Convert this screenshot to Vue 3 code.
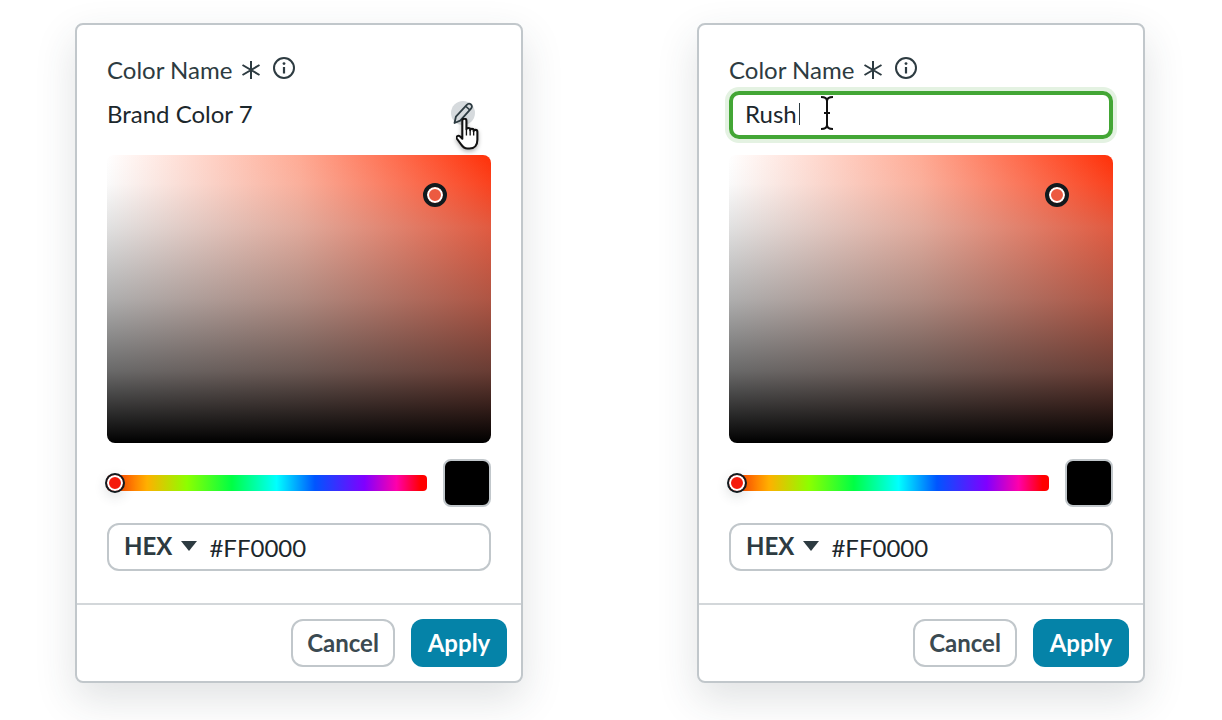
<script setup>
const cards = [{ id: 1, name: 'Brand Color 7', editing: false }, { id: 2, name: 'Rush', editing: true }]
</script>

<template>
  <main class="page">
    <section v-for="card in cards" :key="card.id" class="card">
      <div class="body">
        <div class="label">
          <span>Color Name</span>
          <svg class="asterisk" width="20" height="20" viewBox="0 0 20 20"><path d="M10 1v18M1.500 5l17 10M18.500 5l-17 10" fill="none" stroke="#2d3b41" stroke-width="2"/></svg>
          <svg class="info" width="24" height="24" viewBox="0 0 24 24"><circle cx="12" cy="12" r="10" fill="none" stroke="#2d3b41" stroke-width="2"/><circle cx="12" cy="7.600" r="1.400" fill="#2d3b41"/><path d="M12 11v6.500" stroke="#2d3b41" stroke-width="2.200" fill="none"/></svg>
        </div>
        <div v-if="!card.editing" class="name-row">
          <span class="name-text">{{ card.name }}</span>
          <span class="edit">
            <svg width="24" height="24" viewBox="0 0 24 24"><path d="M3.500 22l1.400-6.300L15.800 3.800c1.200-1.300 3-1.400 4.200-.3s1.200 2.900 0 4.200L9.200 19.600z" fill="none" stroke="#2d3b41" stroke-width="1.800" stroke-linejoin="round"/><path d="M15 5.500l4 3.600" stroke="#2d3b41" stroke-width="1.600"/></svg>
          </span>
          <svg class="hand" width="25" height="32" viewBox="0 0 24 31"><path d="M6 2.600c0-2.600 4-2.600 4 0v8.400c0-1.800 3.600-1.800 3.600 0v.8c0-1.800 3.400-1.800 3.400 0v1c0-1.800 3.600-1.800 3.600 0.400v7.800c0 5-2.600 8.500-7.600 8.500h-2c-3 0-4.600-1.600-6.200-4l-4-5.400c-1.400-2 1.100-3.800 2.900-2.300l2.300 2.300z" fill="#fff" stroke="#111" stroke-width="2" stroke-linejoin="round"/><path d="M10 11v6M13.600 12v5M17 13v4" fill="none" stroke="#111" stroke-width="1.300"/></svg>
        </div>
        <div v-else class="name-input">
          <span class="name-text">{{ card.name }}</span><i class="caret"></i>
          <svg class="ibeam" width="16" height="36" viewBox="0 0 16 36"><path d="M2 2c3 0 6 1 6 4v24c0 3-3 4-6 4M14 2c-3 0-6 1-6 4v24c0 3 3 4 6 4M5 18h6" fill="none" stroke="#111" stroke-width="2"/></svg>
        </div>
        <div class="picker">
          <span class="marker"></span>
        </div>
        <div class="hue-row">
          <div class="hue"><span class="thumb"></span></div>
          <div class="swatch"></div>
        </div>
        <div class="hex">
          <strong>HEX</strong>
          <svg width="18" height="10" viewBox="0 0 18 10"><path d="M1 0h16l-8 10z" fill="#2d3b41"/></svg>
          <span class="hex-value">#FF0000</span>
        </div>
      </div>
      <footer class="footer">
        <button class="btn cancel">Cancel</button>
        <button class="btn apply">Apply</button>
      </footer>
    </section>
  </main>
</template>

<style>
html, body { margin: 0; background: #fff; }
</style>

<style scoped>
.page {
  display: flex;
  gap: 174px;
  padding: 23px 0 0 75px;
  height: 697px;
  overflow: hidden;
  font-family: Lato, "Liberation Sans", sans-serif;
  color: #2d3b41;
}
.card {
  box-sizing: border-box;
  width: 448px;
  height: 660px;
  border: 2px solid #c1c7cb;
  border-radius: 8px;
  background: #fff;
  box-shadow: 0 16px 40px rgba(45, 59, 65, 0.15);
  display: flex;
  flex-direction: column;
}
.body { padding: 30px 30px 0; height: 578px; box-sizing: border-box; }
.label {
  display: flex;
  align-items: center;
  height: 30px;
  font-size: 24px;
  line-height: 30px;
}
.asterisk { margin-left: 9px; }
.info { margin-left: 11px; margin-top: -4px; }
.name-row {
  position: relative;
  display: flex;
  align-items: center;
  justify-content: space-between;
  height: 48px;
  margin-top: 6px;
  font-size: 24px;
  color: #1c272c;
  padding-right: 16px;
  box-sizing: border-box;
}
.name-text { position: relative; top: -2px; }
.edit {
  width: 24px;
  height: 24px;
  border-radius: 50%;
  background: #d6dadd;
  display: flex;
  margin-top: -4px;
}
.hand {
  position: absolute;
  left: 349px;
  top: 27px;
  filter: drop-shadow(0 2px 2px rgba(0, 0, 0, 0.3));
}
.name-input {
  position: relative;
  box-sizing: border-box;
  height: 48px;
  margin-top: 6px;
  border: 4px solid #43a635;
  border-radius: 10px;
  box-shadow: 0 0 0 4px #e4f2e2;
  padding-left: 12px;
  display: flex;
  align-items: center;
  font-size: 24px;
  color: #1c272c;
}
.caret { width: 1.500px; height: 22px; background: #2d3b41; margin: -3px 0 0 2px; }
.ibeam { position: absolute; left: 86px; top: 0; }
.picker {
  position: relative;
  height: 288px;
  margin-top: 16px;
  border-radius: 8px;
  background:
    linear-gradient(to bottom, rgba(255, 255, 255, 0), rgba(209, 209, 209, 0.11) 10%, rgba(169, 169, 169, 0.35) 25%, rgba(113, 113, 113, 0.565) 50%, rgba(64, 64, 64, 0.783) 75%, #000),
    linear-gradient(to right, #fff, #ffab95 50%, #ff3008);
}
.marker {
  position: absolute;
  left: 316px;
  top: 28px;
  box-sizing: border-box;
  width: 24px;
  height: 24px;
  border-radius: 50%;
  border: 4px solid #111a1e;
  background: #ec5a40;
  box-shadow: inset 0 0 0 2px #fff;
}
.hue-row {
  display: flex;
  align-items: center;
  justify-content: space-between;
  margin-top: 16px;
  height: 48px;
}
.hue {
  position: relative;
  width: 320px;
  height: 16px;
  border-radius: 4px;
  background: linear-gradient(to right, #ff2000, #ffb000 12.500%, #8cff00 25%, #00ff44 39%, #00ffff 53%, #0055ff 65%, #8000ff 80.500%, #ff00aa 90.500%, #ff0000 98%);
}
.thumb {
  position: absolute;
  left: -2px;
  top: -2px;
  box-sizing: border-box;
  width: 20px;
  height: 20px;
  border-radius: 50%;
  border: 2px solid #111a1e;
  background: #f51b0c;
  box-shadow: inset 0 0 0 2px #fff, 0 4px 12px rgba(45, 59, 65, 0.15);
}
.swatch {
  box-sizing: border-box;
  width: 48px;
  height: 48px;
  border: 2px solid #c1c7cb;
  border-radius: 8px;
  background: #000;
}
.hex {
  box-sizing: border-box;
  display: flex;
  align-items: center;
  height: 48px;
  margin-top: 16px;
  border: 2px solid #c1c7cb;
  border-radius: 12px;
  padding-left: 15px;
  font-size: 24px;
}
.hex strong { font-weight: 700; position: relative; top: -2px; }
.hex svg { margin-left: 8px; margin-top: -3px; }
.hex-value { margin-left: 11px; color: #1c272c; }
.footer {
  border-top: 2px solid #d3d7da;
  display: flex;
  justify-content: flex-end;
  gap: 16px;
  padding: 14px 14px 0 0;
}
.btn {
  box-sizing: border-box;
  height: 48px;
  border-radius: 12px;
  font: 700 24px Lato, "Liberation Sans", sans-serif;
  padding: 0 0 2px;
}
.cancel { width: 104px; background: #fff; border: 2px solid #c1c7cb; color: #3b4a51; }
.apply { width: 96px; background: #0583a8; border: 0; color: #fff; }
</style>
